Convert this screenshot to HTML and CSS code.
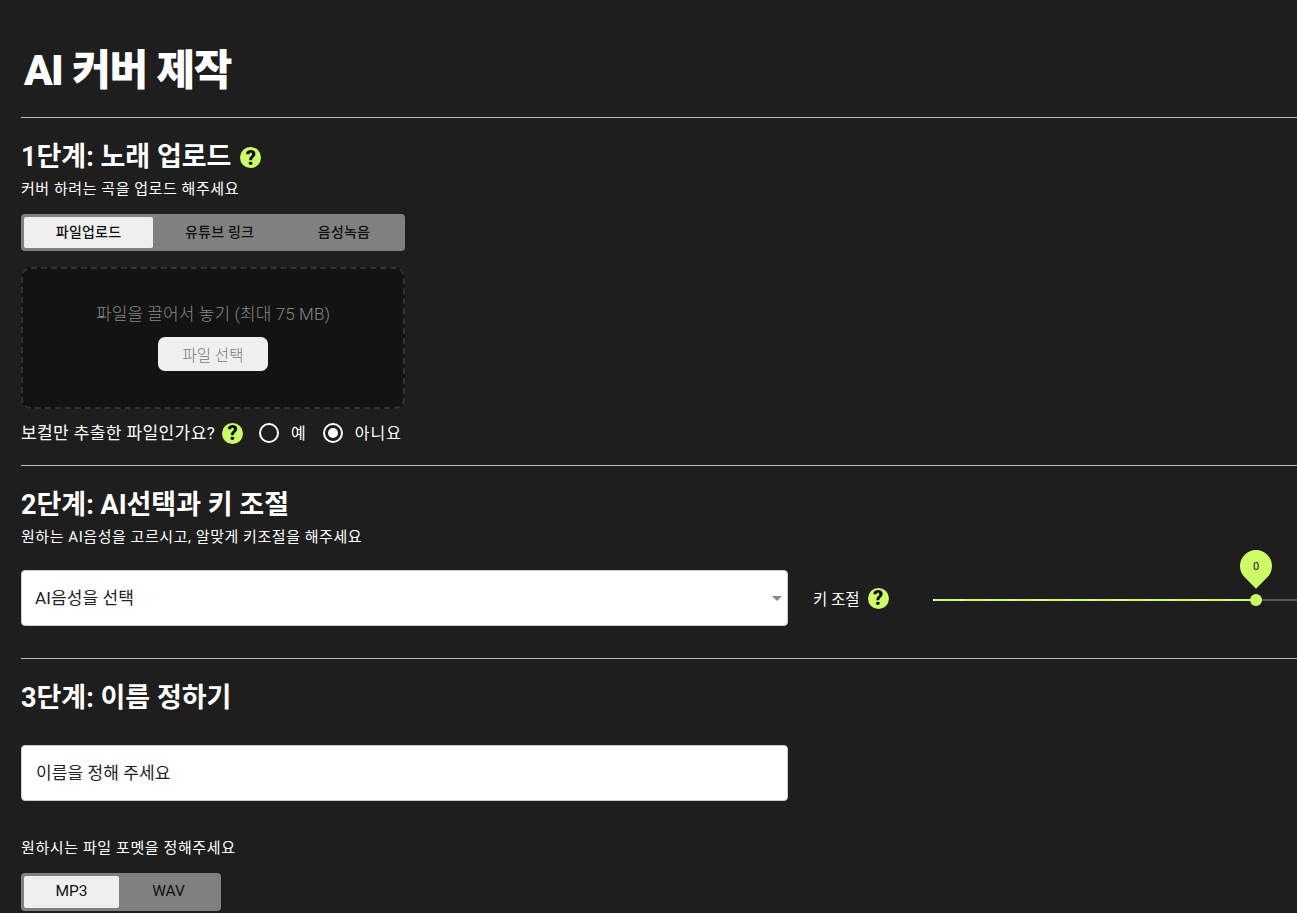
FILE: index.html
```html
<!DOCTYPE html>
<html lang="ko">
<head>
    <meta charset="UTF-8">
    <title>AI 커버 제작</title>
    <link rel="stylesheet" href="styles.css">
</head>
<body>
    <main class="page">
        <h1 class="title">AI 커버 제작</h1>

        <section class="step step-one">
            <h2 class="step-title">1단계: 노래 업로드 <span class="help">?</span></h2>
            <p class="step-desc">커버 하려는 곡을 업로드 해주세요</p>

            <div class="tabs upload-tabs">
                <button class="tab active">파일업로드</button>
                <button class="tab">유튜브 링크</button>
                <button class="tab">음성녹음</button>
            </div>

            <div class="dropzone">
                <p class="drop-text">파일을 끌어서 놓기 (최대 75 MB)</p>
                <button class="file-btn">파일 선택</button>
            </div>

            <div class="vocal-row">
                <span class="vocal-label">보컬만 추출한 파일인가요?</span>
                <span class="help">?</span>
                <label class="radio"><span class="radio-dot"></span><span class="radio-text">예</span></label>
                <label class="radio"><span class="radio-dot checked"></span><span class="radio-text">아니요</span></label>
            </div>
        </section>

        <section class="step step-two">
            <h2 class="step-title">2단계: AI선택과 키 조절</h2>
            <p class="step-desc">원하는 AI음성을 고르시고, 알맞게 키조절을 해주세요</p>

            <div class="voice-row">
                <div class="field select">
                    <span>AI음성을 선택</span>
                    <span class="caret"></span>
                </div>
                <div class="key-label">
                    <span>키 조절</span>
                    <span class="help">?</span>
                </div>
                <div class="slider">
                    <div class="slider-fill"></div>
                    <div class="slider-rest"></div>
                    <div class="slider-thumb"></div>
                    <div class="slider-pin"><span>0</span></div>
                </div>
            </div>
        </section>

        <section class="step step-three">
            <h2 class="step-title">3단계: 이름 정하기</h2>
            <div class="field name-field">이름을 정해 주세요</div>
            <p class="format-label">원하시는 파일 포멧을 정해주세요</p>
            <div class="tabs format-tabs">
                <button class="tab active">MP3</button>
                <button class="tab">WAV</button>
            </div>
        </section>
    </main>
</body>
</html>
```

FILE: styles.css
```css
* {
    box-sizing: border-box;
}

html, body {
    height: 100%;
}

body {
    margin: 0;
    background: #1e1e1e;
    color: #fff;
    font-family: 'Roboto', 'Noto Sans CJK KR', sans-serif;
    overflow: hidden;
}

.page {
    height: 913px;
    padding-left: 21px;
    overflow: hidden;
}

.title {
    margin: 0;
    height: 97px;
    padding: 45px 0 0 3px;
    font-size: 42px;
    line-height: 52px;
    font-weight: 900;
    letter-spacing: -1.5px;
    word-spacing: 1px;
}

.step {
    border-top: 1px solid #b9b9b9;
    width: 1400px;
}

.step-one {
    margin-top: 20px;
    height: 348px;
    padding-top: 21px;
}

.step-two {
    height: 193px;
    padding-top: 21px;
}

.step-three {
    padding-top: 21px;
}

.step-title {
    display: flex;
    align-items: center;
    gap: 9px;
    margin: 0;
    height: 37px;
    font-size: 27px;
    line-height: 37px;
    font-weight: 700;
}

.step-desc {
    margin: 3px 0 0;
    font-size: 15px;
    line-height: 20px;
    letter-spacing: 0.55px;
}

.help {
    display: inline-flex;
    align-items: center;
    justify-content: center;
    flex: none;
    width: 21px;
    height: 21px;
    border-radius: 50%;
    background: #ccff66;
    color: #0c0c0c;
    font-family: 'Roboto', sans-serif;
    font-size: 20px;
    font-weight: 900;
    line-height: 1;
    letter-spacing: 0;
}

.tabs {
    display: flex;
    padding: 3px;
    background: #808080;
    border-radius: 4px;
}

.tab {
    flex: 1 1 auto;
    border: none;
    background: transparent;
    color: #111;
    font-family: inherit;
    border-radius: 2px;
    padding: 0 0 3px;
}

.tab.active {
    background: #efefef;
}

.upload-tabs {
    width: 384px;
    height: 37px;
    margin-top: 15px;
}

.upload-tabs .tab {
    font-size: 14px;
    font-weight: 500;
    letter-spacing: 0.2px;
}

.dropzone {
    display: flex;
    flex-direction: column;
    align-items: center;
    width: 384px;
    height: 142px;
    margin-top: 16px;
    padding-top: 34px;
    background: #131313;
    border: 2px dashed #333;
    border-radius: 10px;
}

.drop-text {
    margin: 0;
    font-size: 17px;
    line-height: 22px;
    font-weight: 300;
    letter-spacing: 0.1px;
    color: #888;
}

.file-btn {
    width: 110px;
    height: 34px;
    margin-top: 12px;
    border: none;
    border-radius: 7px;
    background: #efefef;
    color: #777;
    font-family: inherit;
    font-size: 15.5px;
    font-weight: 300;
}

.vocal-row {
    display: flex;
    align-items: center;
    height: 24px;
    margin-top: 12px;
    font-size: 17px;
    letter-spacing: 0.4px;
}

.vocal-label {
    margin-top: -3px;
}

.vocal-row .help {
    margin-left: 7px;
}

.radio {
    display: flex;
    align-items: center;
    gap: 12px;
    margin-left: 16px;
    font-size: 16px;
    letter-spacing: 1px;
}

.radio-text {
    margin-top: -3px;
}

.radio-dot {
    position: relative;
    width: 20px;
    height: 20px;
    border: 2px solid #fff;
    border-radius: 50%;
}

.radio-dot.checked::after {
    content: "";
    position: absolute;
    inset: 3px;
    border-radius: 50%;
    background: #fff;
}

.voice-row {
    display: flex;
    align-items: center;
    margin-top: 23px;
}

.field {
    width: 767px;
    background: #fff;
    border: 1px solid #ccc;
    border-radius: 4px;
    color: #222;
    font-size: 17px;
    letter-spacing: 0.1px;
}

.select {
    display: flex;
    align-items: center;
    justify-content: space-between;
    height: 56px;
    padding: 0 5px 3px 13px;
}

.caret {
    width: 0;
    height: 0;
    margin-top: 3px;
    border-left: 5px solid transparent;
    border-right: 5px solid transparent;
    border-top: 5px solid #888;
}

.key-label {
    display: flex;
    align-items: center;
    gap: 8px;
    width: 120px;
    margin-left: 25px;
    font-size: 15.5px;
}

.slider {
    position: relative;
    width: 364px;
    height: 4px;
    margin-top: 3px;
}

.slider-fill {
    position: absolute;
    left: 0;
    top: 1px;
    width: 323px;
    height: 2px;
    background: repeating-linear-gradient(90deg, #fff 0 2px, #ccff66 2px 26.6px);
}

.slider-rest {
    position: absolute;
    left: 323px;
    right: 0;
    top: 1px;
    height: 2px;
    background: #555;
}

.slider-thumb {
    position: absolute;
    left: 317px;
    top: -4px;
    width: 12px;
    height: 12px;
    border-radius: 50%;
    background: #ccff66;
}

.slider-pin {
    position: absolute;
    left: 307px;
    top: -48px;
    width: 32px;
    height: 32px;
    border-radius: 50% 50% 0 50%;
    background: #ccff66;
    transform: rotate(45deg);
    color: #111;
    font-size: 11px;
}

.slider-pin span {
    display: flex;
    align-items: center;
    justify-content: center;
    height: 100%;
    transform: rotate(-45deg);
}

.name-field {
    display: flex;
    align-items: center;
    height: 56px;
    margin-top: 28px;
    padding: 0 0 3px 14px;
}

.format-label {
    margin: 37px 0 0;
    font-size: 15px;
    line-height: 20px;
    letter-spacing: 0.6px;
}

.format-tabs {
    width: 200px;
    height: 38px;
    margin-top: 15px;
}

.format-tabs .tab {
    flex: 0 0 95px;
    font-size: 15.5px;
}

.format-tabs .tab + .tab {
    flex: 1 1 auto;
}
```
